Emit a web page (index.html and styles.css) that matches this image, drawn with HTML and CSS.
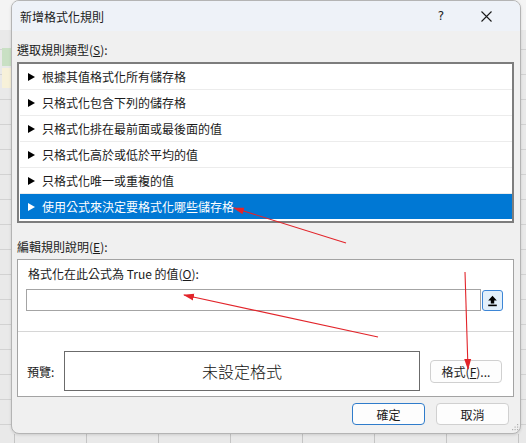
FILE: index.html
```html
<!DOCTYPE html>
<html lang="zh-Hant">
<head>
<meta charset="utf-8">
<title>新增格式化規則</title>
<link rel="stylesheet" href="styles.css">
</head>
<body>
<div class="dialog">
  <div class="titlebar">
    <span class="title">新增格式化規則</span>
    <span class="help">?</span>
    <span class="close"><svg width="11" height="11" viewBox="0 0 11 11"><path d="M0.5 0.5 L10.5 10.5 M10.5 0.5 L0.5 10.5" stroke="#1a1a1a" stroke-width="1.1" fill="none"/></svg></span>
  </div>
  <div class="content">
    <div class="label l1">選取規則類型(<u>S</u>):</div>
    <ul class="rules">
      <li><i class="tri"></i>根據其值格式化所有儲存格</li>
      <li><i class="tri"></i>只格式化包含下列的儲存格</li>
      <li><i class="tri"></i>只格式化排在最前面或最後面的值</li>
      <li><i class="tri"></i>只格式化高於或低於平均的值</li>
      <li><i class="tri"></i>只格式化唯一或重複的值</li>
      <li class="sel"><i class="tri"></i>使用公式來決定要格式化哪些儲存格</li>
    </ul>
    <div class="label l2">編輯規則說明(<u>E</u>):</div>
    <div class="panel">
      <div class="label l3">格式化在此公式為 True 的值(<u>O</u>):</div>
      <div class="inputrow">
        <div class="input"></div>
        <button class="collapse"><svg width="11" height="12" viewBox="0 0 11 12"><path d="M5.5 0.8 L1.2 5.6 H3.8 V8.4 H7.2 V5.6 H9.8 Z" fill="#000"/><rect x="1.2" y="9.6" width="8.6" height="1.6" fill="#000"/></svg></button>
      </div>
      <div class="sep"></div>
      <div class="preview-row">
        <span class="plabel">預覽:</span>
        <div class="pbox">未設定格式</div>
        <button class="btn fmt">格式(<u>F</u>)...</button>
      </div>
    </div>
    <div class="actions">
      <button class="btn ok">確定</button>
      <button class="btn cancel">取消</button>
    </div>
  </div>
  <svg class="grip" width="9" height="9" viewBox="0 0 9 9"><g fill="#b0b0b0"><rect x="7" y="1" width="1.2" height="1.2"/><rect x="4.5" y="3.5" width="1.2" height="1.2"/><rect x="7" y="3.5" width="1.2" height="1.2"/><rect x="2" y="6" width="1.2" height="1.2"/><rect x="4.5" y="6" width="1.2" height="1.2"/><rect x="7" y="6" width="1.2" height="1.2"/></g></svg>
</div>
<div class="sheet-bottom"></div>
<svg class="annot" width="526" height="443" viewBox="0 0 526 443">
  <defs>
    <marker id="ah" markerWidth="11" markerHeight="8" refX="10" refY="4" orient="auto" markerUnits="userSpaceOnUse">
      <path d="M0 0.5 L11 4 L0 7.5 Z" fill="#e2242a"/>
    </marker>
  </defs>
  <g stroke="#e2242a" stroke-width="1.1" fill="none">
    <line x1="346" y1="243" x2="234" y2="208" marker-end="url(#ah)"/>
    <line x1="378" y1="337" x2="184" y2="295" marker-end="url(#ah)"/>
    <line x1="465" y1="272" x2="468" y2="369" marker-end="url(#ah)"/>
  </g>
</svg>
</body>
</html>
```
FILE: styles.css
```css
* { box-sizing: border-box; }
html, body { margin: 0; padding: 0; }
body {
  width: 526px;
  height: 443px;
  overflow: hidden;
  position: relative;
  font-family: "Noto Sans CJK TC", "Noto Sans", sans-serif;
  font-size: 12px;
  color: #1b1b1b;
  background:
    linear-gradient(#c9e0c4, #c9e0c4) 2px 48px / 9px 18px no-repeat,
    linear-gradient(#f7f1d9, #f7f1d9) 2px 68px / 9px 20px no-repeat,
    linear-gradient(#f4f4f4, #f4f4f4) 0 0 / 526px 30px no-repeat,
    repeating-linear-gradient(to bottom, #e9e9e9 0, #e9e9e9 24px, #d2d2d2 24px, #d2d2d2 25px);
}
u { text-decoration: underline; text-underline-offset: 1px; }

.dialog {
  position: relative;
  margin-left: 11px;
  width: 510px;
  height: 434px;
  border: 1px solid #b4b4b4;
  border-radius: 8px;
  background: #f0f0f0;
  overflow: hidden;
  box-shadow: 0 1px 3px rgba(0,0,0,0.12);
}

.titlebar {
  height: 30px;
  display: flex;
  align-items: center;
  background: #eef2f8;
  padding-right: 22px;
}
.title { padding-left: 8px; font-size: 12px; }
.help {
  margin-left: auto;
  width: 20px;
  text-align: center;
  font-family: "DejaVu Sans", sans-serif;
  font-size: 12px;
}
.close {
  margin-left: 23px;
  width: 24px;
  height: 14px;
  display: flex;
  align-items: center;
  justify-content: center;
}

.content { padding: 11px 6px 0 5px; }
.label { line-height: 16px; height: 16px; white-space: nowrap; }
.l1 { margin-bottom: 4px; }

.rules {
  list-style: none;
  margin: 0;
  padding: 0 0 2px 1px;
  height: 161px;
  border: 2px solid #7d7d7d;
  background: #fff;
}
.rules li {
  height: 26px;
  display: flex;
  align-items: center;
  padding-left: 8px;
  border-bottom: 1px solid #ececec;
  white-space: nowrap;
}
.rules li.sel {
  height: 25px;
  border-bottom: none;
  background: #0078d4;
  color: #fff;
}
.tri {
  width: 0;
  height: 0;
  border-top: 4px solid transparent;
  border-bottom: 4px solid transparent;
  border-left: 7px solid #000;
  margin-right: 7px;
}
.sel .tri { border-left-color: #fff; }

.l2 { margin-top: 16px; margin-bottom: 4px; }

.panel {
  height: 138px;
  border: 1px solid #a3a3a3;
  background: #fff;
  padding-top: 6px;
}
.l3 { padding-left: 10px; margin-bottom: 7px; }
.inputrow { display: flex; padding-left: 8px; height: 22px; }
.input {
  width: 455px;
  height: 22px;
  border: 1px solid #a4a4a4;
  background: #fff;
}
.collapse {
  margin: 1px 0 0 1px;
  width: 21px;
  height: 21px;
  padding: 0;
  border: 1px solid #3d86d6;
  border-radius: 3px;
  background: #e3f0fb;
  display: flex;
  align-items: center;
  justify-content: center;
}
.sep { margin-top: 20px; height: 1px; background: #d6d6d6; }
.preview-row {
  display: flex;
  align-items: center;
  margin-top: 19px;
  height: 40px;
  padding-left: 9px;
}
.plabel { width: 37px; }
.pbox {
  width: 356px;
  height: 40px;
  border: 1px solid #6b6b6b;
  display: flex;
  align-items: center;
  justify-content: center;
  font-size: 16px;
  font-weight: 300;
  color: #111;
}
.btn {
  font-family: "Noto Sans CJK TC", "Noto Sans", sans-serif;
  font-size: 12px;
  color: #1b1b1b;
  background: #fdfdfd;
  border: 1px solid #d0d0d0;
  border-radius: 4px;
  padding: 0;
  display: flex;
  align-items: center;
  justify-content: center;
}
.fmt { margin-left: 10px; width: 72px; height: 23px; }

.actions {
  display: flex;
  justify-content: flex-end;
  gap: 11px;
  margin-top: 6px;
  padding-right: 5px;
}
.ok, .cancel { width: 73px; height: 22px; }
.ok { border: 1.5px solid #2f7ccb; }

.grip { position: absolute; right: 1px; bottom: 1px; }

.sheet-bottom {
  height: 9px;
  background:
    repeating-linear-gradient(to right, transparent 0, transparent 14px, #c4c4c4 14px, #c4c4c4 15px, transparent 15px, transparent 72px);
  background-color: #e9e9e9;
}

.annot { position: absolute; left: 0; top: 0; pointer-events: none; }
```
